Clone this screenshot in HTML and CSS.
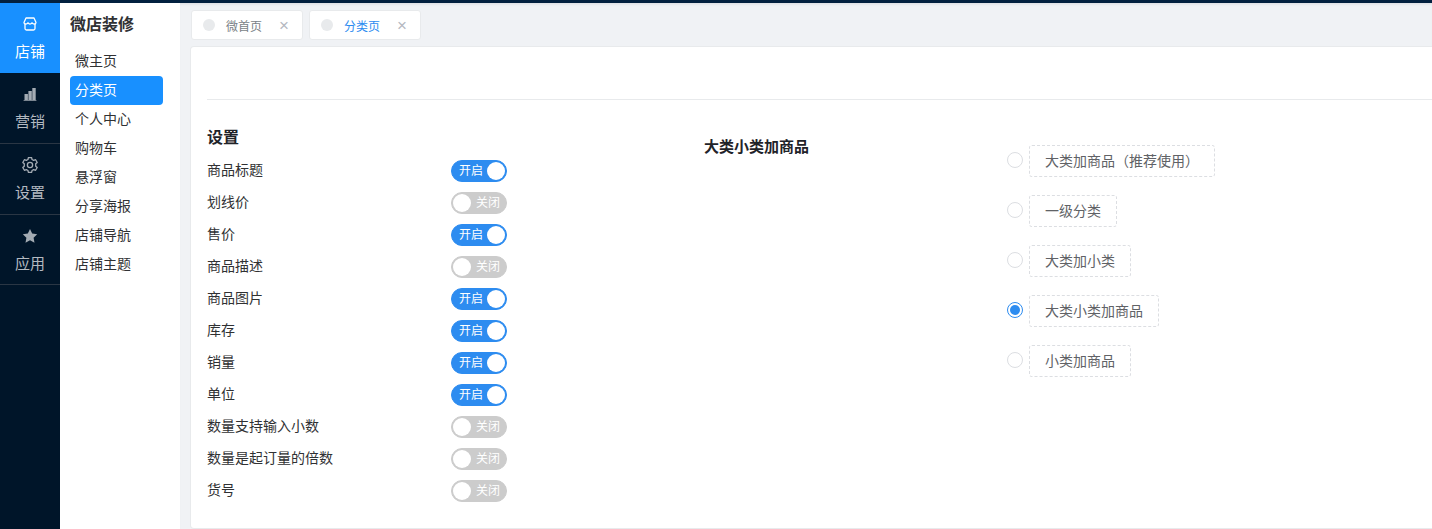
FILE: index.html
```html
<!DOCTYPE html>
<html lang="zh">
<head>
<meta charset="utf-8">
<title>微店装修</title>
<link rel="stylesheet" href="styles.css">
</head>
<body>
<div class="topbar"></div>
<div class="app">
  <nav class="rail">
    <a class="rail-item active">
      <svg class="rail-icon" viewBox="0 0 16 16"><path d="M4 2h8l2 4.400c0 1-.8 1.600-1.800 1.600S10.400 7.400 10 6.800C9.600 7.400 8.800 8 8 8s-1.600-.6-2-1.200C5.600 7.400 4.800 8 3.800 8S2 7.400 2 6.400Z" fill="none" stroke="currentColor" stroke-width="1.300" stroke-linejoin="round"/><path d="M3 8v4.500c0 .8.7 1.500 1.500 1.500h7c.8 0 1.500-.7 1.500-1.500V8" fill="none" stroke="currentColor" stroke-width="1.300"/></svg>
      <span>店铺</span>
    </a>
    <a class="rail-item">
      <svg class="rail-icon" viewBox="0 0 16 16"><path d="M2.500 8h3.400v6H2.500ZM6.400 5h3.400v9H6.400ZM10.300 2h3.400v12h-3.400ZM1.600 14h12.800v.8H1.600Z" fill="#a3abb3"/></svg>
      <span>营销</span>
    </a>
    <a class="rail-item">
      <svg class="rail-icon" viewBox="1 1 14 14"><circle cx="8" cy="8" r="2.300" fill="none" stroke="#a3abb3" stroke-width="1.150"/><path d="M6.600 1.500h2.800l.4 1.700 1.400.8 1.700-.6 1.400 2.400-1.300 1.200v2l1.300 1.200-1.400 2.400-1.700-.6-1.400.8-.4 1.700H6.600l-.4-1.700-1.400-.8-1.700.6-1.400-2.400 1.300-1.200V7L1.700 5.800l1.400-2.400 1.700.6 1.400-.8Z" fill="none" stroke="#a3abb3" stroke-width="1.150" stroke-linejoin="round"/></svg>
      <span>设置</span>
    </a>
    <a class="rail-item last">
      <svg class="rail-icon" viewBox="0 0 16 16"><path d="m8 .9 2.200 4.600 5 .7-3.600 3.500.9 5L8 12.300l-4.500 2.400.9-5L.8 6.200l5-.7Z" fill="#a3abb3"/></svg>
      <span>应用</span>
    </a>
  </nav>
  <aside class="subnav">
    <h2 class="subnav-title">微店装修</h2>
    <ul class="subnav-list">
      <li class="subnav-item">微主页</li>
      <li class="subnav-item current">分类页</li>
      <li class="subnav-item">个人中心</li>
      <li class="subnav-item">购物车</li>
      <li class="subnav-item">悬浮窗</li>
      <li class="subnav-item">分享海报</li>
      <li class="subnav-item">店铺导航</li>
      <li class="subnav-item">店铺主题</li>
    </ul>
  </aside>
  <main class="main">
    <div class="tabs">
      <div class="tab"><i class="tab-dot"></i><span class="tab-text">微首页</span><span class="tab-close">×</span></div>
      <div class="tab on"><i class="tab-dot"></i><span class="tab-text">分类页</span><span class="tab-close">×</span></div>
    </div>
    <section class="card">
      <div class="card-head"></div>
      <div class="card-body">
        <div class="settings">
          <h3 class="settings-title">设置</h3>
          <div class="row"><span class="row-label">商品标题</span><span class="switch on"><em>开启</em><b></b></span></div>
          <div class="row"><span class="row-label">划线价</span><span class="switch"><b></b><em>关闭</em></span></div>
          <div class="row"><span class="row-label">售价</span><span class="switch on"><em>开启</em><b></b></span></div>
          <div class="row"><span class="row-label">商品描述</span><span class="switch"><b></b><em>关闭</em></span></div>
          <div class="row"><span class="row-label">商品图片</span><span class="switch on"><em>开启</em><b></b></span></div>
          <div class="row"><span class="row-label">库存</span><span class="switch on"><em>开启</em><b></b></span></div>
          <div class="row"><span class="row-label">销量</span><span class="switch on"><em>开启</em><b></b></span></div>
          <div class="row"><span class="row-label">单位</span><span class="switch on"><em>开启</em><b></b></span></div>
          <div class="row"><span class="row-label">数量支持输入小数</span><span class="switch"><b></b><em>关闭</em></span></div>
          <div class="row"><span class="row-label">数量是起订量的倍数</span><span class="switch"><b></b><em>关闭</em></span></div>
          <div class="row"><span class="row-label">货号</span><span class="switch"><b></b><em>关闭</em></span></div>
        </div>
        <h3 class="layout-title">大类小类加商品</h3>
        <div class="options">
          <div class="option"><i class="radio"></i><span class="option-box">大类加商品（推荐使用）</span></div>
          <div class="option"><i class="radio"></i><span class="option-box">一级分类</span></div>
          <div class="option"><i class="radio"></i><span class="option-box">大类加小类</span></div>
          <div class="option"><i class="radio checked"></i><span class="option-box">大类小类加商品</span></div>
          <div class="option"><i class="radio"></i><span class="option-box">小类加商品</span></div>
        </div>
      </div>
    </section>
  </main>
</div>
</body>
</html>
```
FILE: styles.css
```css
* { box-sizing: border-box; }
html, body { margin: 0; height: 529px; overflow: hidden; }
body { font-family: "Noto Sans CJK SC", "Liberation Sans", sans-serif; font-size: 14px; color: #333; background: #f0f2f5; }
.topbar { height: 3px; background: #02203f; }
.app { display: flex; height: 526px; }

.rail { width: 60px; flex: none; background: #001529; color: #b4bac1; }
.rail-item { display: flex; flex-direction: column; align-items: center; height: 71px; padding-top: 13px; border-bottom: 1px solid #2a3644; font-size: 15px; line-height: 22px; }
.rail-item.active { height: 70px; background: #1890ff; color: #fff; border-bottom: 0; }
.rail-item.last { height: 70px; }
.rail-icon { width: 16px; height: 16px; margin-bottom: 8px; }

.subnav { width: 120px; flex: none; background: #fff; padding: 0 10px; }
.subnav-title { margin: 9px 0 13px; font-size: 16px; line-height: 22px; font-weight: 700; color: #303133; }
.subnav-list { list-style: none; margin: 0; padding: 0; width: 93px; }
.subnav-item { height: 29px; line-height: 27px; padding-left: 5px; color: #303133; }
.subnav-item.current { background: #1890ff; color: #fff; border-radius: 4px; }

.main { flex: 1; min-width: 0; padding: 7px 0 0 11px; box-shadow: inset 0 3px 3px -2px rgba(0, 21, 41, .1); }
.tabs { display: flex; gap: 6px; height: 30px; margin-bottom: 7px; }
.tab { display: flex; align-items: center; width: 112px; background: #fff; border: 1px solid #e8eaec; border-radius: 3px; padding-left: 11px; font-size: 12px; color: #7a7f87; }
.tab.on .tab-text { color: #2d8cf0; }
.tab-dot { width: 12px; height: 12px; border-radius: 50%; background: #e8eaec; }
.tab-text { margin-left: 11px; width: 36px; }
.tab-close { margin-left: 17px; font-size: 17px; line-height: 1; color: #b4b8bf; font-family: "Liberation Sans", sans-serif; }

.card { height: 481px; background: #fff; border-radius: 3px 0 0 3px; box-shadow: 0 0 0 1px #e8eaec; padding: 0 0 0 16px; }
.card-head { height: 53px; border-bottom: 1px solid #e8eaec; }
.card-body { display: flex; align-items: flex-start; }

.settings { width: 497px; flex: none; padding-top: 26px; }
.settings-title { margin: -2px 0 7px; font-size: 16px; line-height: 24px; font-weight: 700; color: #1f2329; }
.row { display: flex; align-items: center; height: 32px; color: #303133; }
.row-label { width: 244px; flex: none; padding-bottom: 4px; }

.switch { display: flex; align-items: center; justify-content: space-between; width: 56px; height: 22px; border-radius: 11px; background: #ccc; border: 1px solid #ccc; font-size: 12px; color: #fff; padding: 0 6px 0 1px; }
.switch em { font-style: normal; line-height: 18px; padding-bottom: 2px; }
.switch b { width: 18px; height: 18px; border-radius: 50%; background: #fff; }
.switch.on { background: #2d8cf0; border-color: #2d8cf0; padding: 0 1px 0 7px; }

.layout-title { margin: 35px 0 0; width: 303px; flex: none; font-size: 15px; line-height: 22px; font-weight: 700; color: #1f2329; }

.options { display: flex; flex-direction: column; gap: 18px; padding-top: 45px; }
.option { display: flex; align-items: center; height: 32px; gap: 6px; }
.radio { width: 16px; height: 16px; border: 1px solid #dcdee2; border-radius: 50%; background: #fff; margin-bottom: 2px; }
.radio.checked { border-color: #2d8cf0; }
.radio.checked::after { content: ""; display: block; width: 10px; height: 10px; margin: 2px; border-radius: 50%; background: #2d8cf0; }
.option-box { height: 32px; line-height: 28px; padding: 0 15px; border: 1px dashed #dcdee2; border-radius: 3px; color: #606266; }
```
